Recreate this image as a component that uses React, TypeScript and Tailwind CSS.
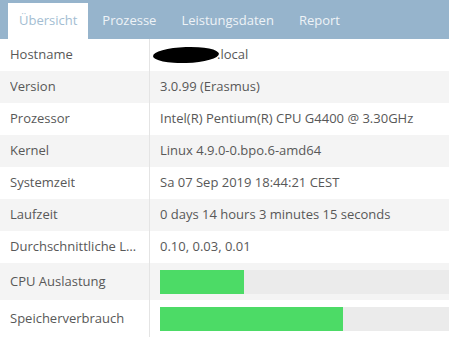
import React from 'react';

const rows: { label: string; value?: string; bar?: number; secret?: boolean }[] = [
  { label: 'Hostname', value: 'local', secret: true },
  { label: 'Version', value: '3.0.99 (Erasmus)' },
  { label: 'Prozessor', value: 'Intel(R) Pentium(R) CPU G4400 @ 3.30GHz' },
  { label: 'Kernel', value: 'Linux 4.9.0-0.bpo.6-amd64' },
  { label: 'Systemzeit', value: 'Sa 07 Sep 2019 18:44:21 CEST' },
  { label: 'Laufzeit', value: '0 days 14 hours 3 minutes 15 seconds' },
  { label: 'Durchschnittliche Last', value: '0.10, 0.03, 0.01' },
  { label: 'CPU Auslastung', bar: 84 },
  { label: 'Speicherverbrauch', bar: 183 },
];

const tabs = ['Übersicht', 'Prozesse', 'Leistungsdaten', 'Report'];

export default function App() {
  return (
    <div className="w-[449px] h-[342px] overflow-hidden bg-white text-[13px] text-[#585858]" style={{ fontFamily: '"Open Sans", "Liberation Sans", sans-serif' }}>
      <div className="flex h-[39px] items-end gap-[3px] bg-[#96b4cc] pl-2">
        {tabs.map((t, i) => (
          <div
            key={t}
            className={`flex h-[36px] items-center px-[11px] text-[13px] ${i === 0 ? 'bg-white text-[#a3bdd2]' : 'text-[#eef3f7]'}`}
          >
            {t}
          </div>
        ))}
      </div>
      <div>
        {rows.map((r, i) => (
          <div key={r.label} className={`flex ${r.bar ? 'h-[37px]' : 'h-[32px]'} ${i % 2 === 1 ? 'bg-[#f4f4f4]' : 'bg-white'}`}>
            <div className="flex w-[150px] shrink-0 items-center border-r border-[#e4e4e4] pl-[10px] pr-[12px]">
              <span className="truncate">{r.label}</span>
            </div>
            <div className="flex flex-1 items-center pl-[10px]">
              {r.bar !== undefined ? (
                <div className="h-[24px] w-full bg-[#ebebeb]">
                  <div className="h-full bg-[#4cdb66]" style={{ width: r.bar }} />
                </div>
              ) : r.secret ? (
                <span className="flex items-center">
                  <span className="-ml-[7px] inline-block h-[16px] w-[66px] -rotate-2 rounded-[50%] bg-black" />
                  <span className="-ml-[2px]">.{r.value}</span>
                </span>
              ) : (
                <span className="whitespace-nowrap">{r.value}</span>
              )}
            </div>
          </div>
        ))}
      </div>
    </div>
  );
}
